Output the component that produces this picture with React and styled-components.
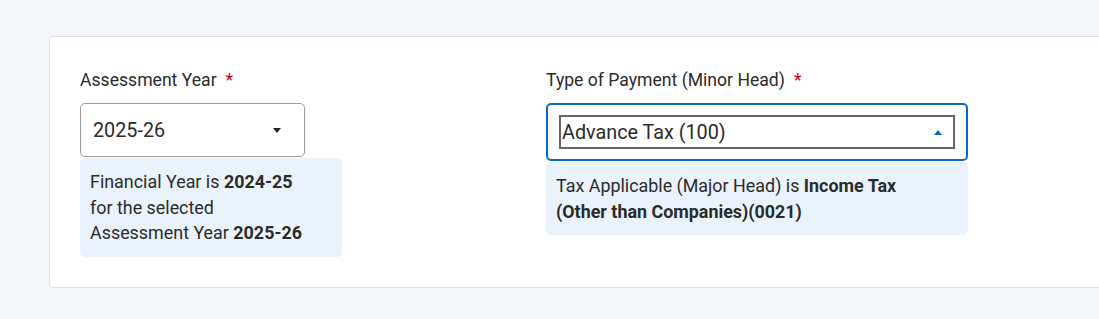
import React from "react";
import styled, { createGlobalStyle } from "styled-components";

const GlobalStyle = createGlobalStyle`
  body {
    margin: 0;
    background: #f5f6fa;
    font-family: Roboto, "Liberation Sans", sans-serif;
    color: #2b2b2b;
  }
`;

const Page = styled.div`
  padding: 36px 0 0 49px;
  height: 319px;
  box-sizing: border-box;
  overflow: hidden;
`;

const Card = styled.div`
  background: #fff;
  border: 1px solid #dde1e8;
  border-right: none;
  border-radius: 4px 0 0 4px;
  height: 252px;
  box-sizing: border-box;
  padding: 32px 0 0 30px;
  display: grid;
  grid-template-columns: 466px 421px;
  align-items: start;
`;

const Field = styled.div`
  display: flex;
  flex-direction: column;
`;

const Label = styled.label`
  font-size: 17.6px;
  line-height: 22px;
  color: #2b2b2b;
  margin-bottom: 12px;
`;

const Star = styled.span`
  color: #d0021b;
  margin-left: 9px;
`;

const Select = styled.div`
  box-sizing: border-box;
  width: ${(p) => p.$width}px;
  height: ${(p) => (p.$open ? 58 : 54)}px;
  border: ${(p) => (p.$open ? "2px solid #0b68c9" : "1px solid #9b9b9b")};
  border-radius: 5px;
  background: #fff;
  display: flex;
  align-items: center;
  padding: ${(p) => (p.$open ? "0 11px" : "0 12px")};
`;

const Value = styled.div`
  flex: 1;
  display: flex;
  align-items: center;
  justify-content: space-between;
  font-size: 19.8px;
  color: #2b2b2b;
  box-sizing: border-box;
  height: ${(p) => (p.$focus ? "34px" : "auto")};
  border: ${(p) => (p.$focus ? "2px solid #666" : "none")};
  padding: ${(p) => (p.$focus ? "0 11px 0 1px" : "0 11px 0 0")};
`;

const Caret = styled.span`
  width: 0;
  height: 0;
  border-left: 4.5px solid transparent;
  border-right: 4.5px solid transparent;
  ${(p) =>
    p.$up
      ? "border-bottom: 5px solid #0b68c9;"
      : "border-top: 5px solid #222;"}
`;

const Info = styled.div`
  box-sizing: border-box;
  width: ${(p) => p.$width}px;
  margin-top: 1px;
  background: #eaf2fc;
  border-radius: 5px;
  padding: 11px 10px;
  font-size: 17.9px;
  line-height: 25.6px;
  color: #2b2b2b;

  b {
    font-weight: 700;
  }
`;

export default function App() {
  return (
    <>
      <GlobalStyle />
      <Page>
        <Card>
          <Field>
            <Label>
              Assessment Year<Star>*</Star>
            </Label>
            <Select $width={225}>
              <Value>
                2025-26
                <Caret />
              </Value>
            </Select>
            <Info $width={262}>
              Financial Year is <b>2024-25</b>
              <br />
              for the selected
              <br />
              Assessment Year <b>2025-26</b>
            </Info>
          </Field>
          <Field>
            <Label>
              Type of Payment (Minor Head)<Star>*</Star>
            </Label>
            <Select $width={422} $open>
              <Value $focus>
                Advance Tax (100)
                <Caret $up />
              </Value>
            </Select>
            <Info $width={422}>
              Tax Applicable (Major Head) is <b>Income Tax</b>
              <br />
              <b>(Other than Companies)(0021)</b>
            </Info>
          </Field>
        </Card>
      </Page>
    </>
  );
}
